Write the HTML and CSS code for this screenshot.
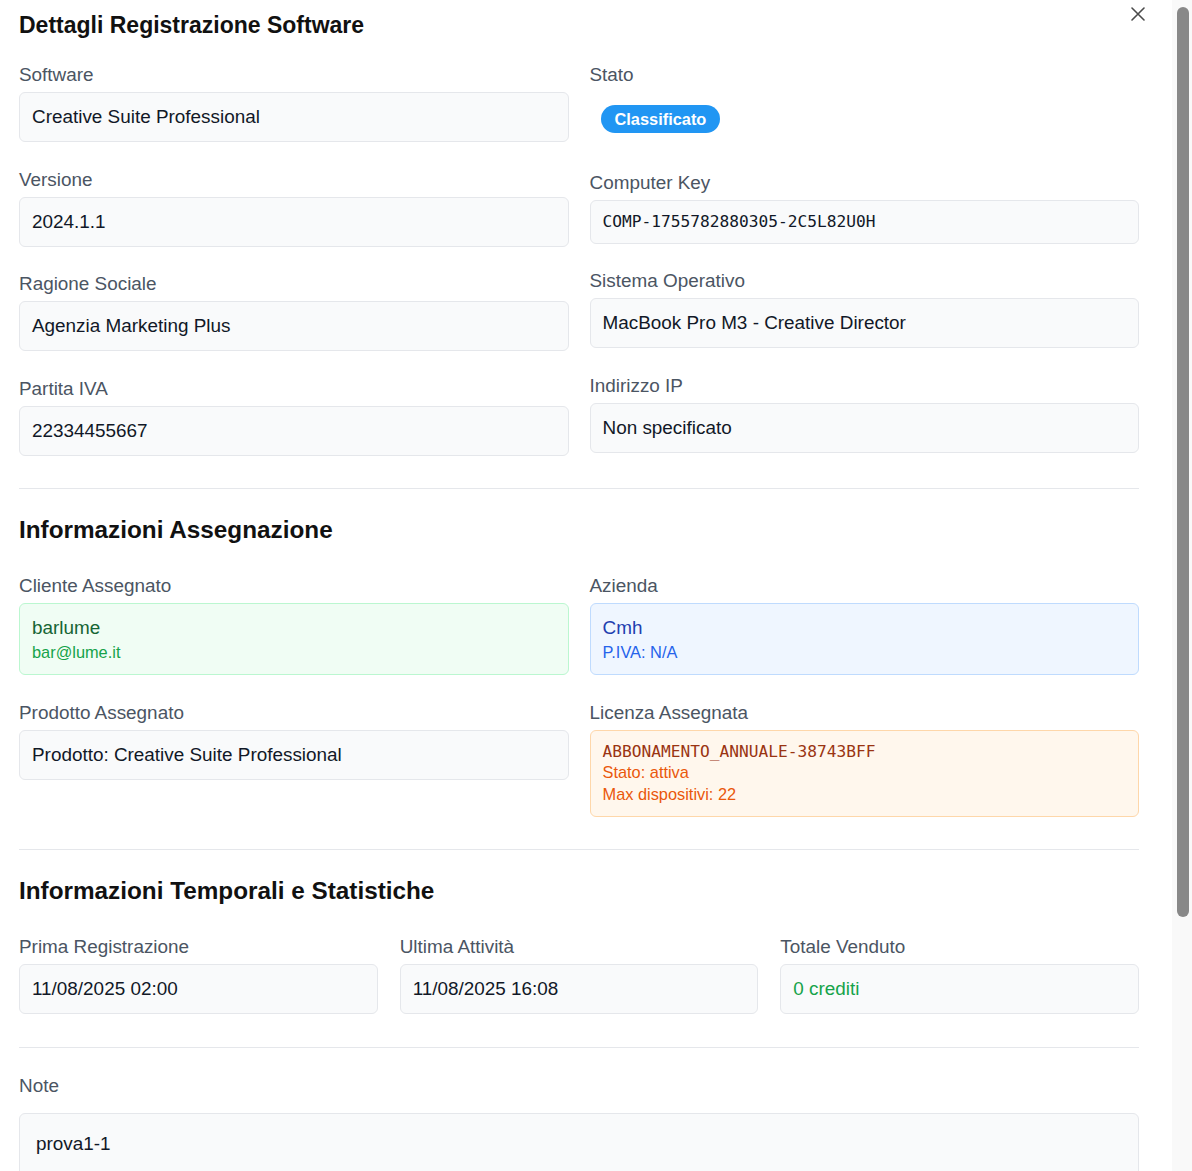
FILE: index.html
```html
<!DOCTYPE html>
<html lang="it">
<head>
<meta charset="utf-8">
<title>Dettagli Registrazione Software</title>
<link rel="stylesheet" href="styles.css">
</head>
<body>
<div class="modal">
  <button class="close" aria-label="Chiudi">
    <svg viewBox="0 0 14 14" width="14" height="14"><path d="M1 1L13 13M13 1L1 13" stroke="#4b4b4b" stroke-width="1.6" fill="none" stroke-linecap="round"/></svg>
  </button>
  <div class="scroller">
    <div class="content">
      <h2 class="title">Dettagli Registrazione Software</h2>

      <div class="grid2 split">
        <div class="col">
          <div class="field">
            <div class="label">Software</div>
            <div class="box">Creative Suite Professional</div>
          </div>
          <div class="field">
            <div class="label">Versione</div>
            <div class="box">2024.1.1</div>
          </div>
          <div class="field">
            <div class="label">Ragione Sociale</div>
            <div class="box">Agenzia Marketing Plus</div>
          </div>
          <div class="field">
            <div class="label">Partita IVA</div>
            <div class="box">22334455667</div>
          </div>
        </div>
        <div class="col">
          <div class="field">
            <div class="label">Stato</div>
            <div class="badge-wrap"><span class="badge">Classificato</span></div>
          </div>
          <div class="field">
            <div class="label">Computer Key</div>
            <div class="box mono">COMP-1755782880305-2C5L82U0H</div>
          </div>
          <div class="field">
            <div class="label">Sistema Operativo</div>
            <div class="box">MacBook Pro M3 - Creative Director</div>
          </div>
          <div class="field">
            <div class="label">Indirizzo IP</div>
            <div class="box">Non specificato</div>
          </div>
        </div>
      </div>

      <div class="divider"></div>
      <h3 class="section-title">Informazioni Assegnazione</h3>

      <div class="grid2">
        <div class="field">
          <div class="label">Cliente Assegnato</div>
          <div class="box green">
            <div class="main">barlume</div>
            <div class="sub">bar@lume.it</div>
          </div>
        </div>
        <div class="field">
          <div class="label">Azienda</div>
          <div class="box blue">
            <div class="main">Cmh</div>
            <div class="sub">P.IVA: N/A</div>
          </div>
        </div>
        <div class="field">
          <div class="label">Prodotto Assegnato</div>
          <div class="box">Prodotto: Creative Suite Professional</div>
        </div>
        <div class="field">
          <div class="label">Licenza Assegnata</div>
          <div class="box orange">
            <div class="main mono">ABBONAMENTO_ANNUALE-38743BFF</div>
            <div class="sub">Stato: attiva</div>
            <div class="sub">Max dispositivi: 22</div>
          </div>
        </div>
      </div>

      <div class="divider"></div>
      <h3 class="section-title">Informazioni Temporali e Statistiche</h3>

      <div class="grid3">
        <div class="field">
          <div class="label">Prima Registrazione</div>
          <div class="box">11/08/2025 02:00</div>
        </div>
        <div class="field">
          <div class="label">Ultima Attività</div>
          <div class="box">11/08/2025 16:08</div>
        </div>
        <div class="field">
          <div class="label">Totale Venduto</div>
          <div class="box credit">0 crediti</div>
        </div>
      </div>

      <div class="divider note-divider"></div>
      <div class="field note">
        <div class="label">Note</div>
        <div class="box note-box">prova1-1</div>
      </div>
    </div>
  </div>
  <div class="scrollbar" aria-hidden="true">
    <div class="thumb"></div>
  </div>
</div>
</body>
</html>
```

FILE: styles.css
```css
html, body {
  margin: 0;
  padding: 0;
  background: #ffffff;
}

body {
  font-family: "Liberation Sans", Arial, sans-serif;
  color: #111827;
}

.modal {
  position: relative;
  display: flex;
  width: 1192px;
  height: 1171px;
  background: #ffffff;
  overflow: hidden;
}

.scroller {
  flex: 1;
  min-width: 0;
  height: 100%;
  overflow: hidden;
}

.scrollbar {
  width: 20px;
  flex: none;
  box-sizing: border-box;
  padding: 7px 3px 0 5px;
  background: #f9f9f9;
}

.thumb {
  height: 910px;
  border-radius: 6px;
  background: #888888;
}

.close {
  position: absolute;
  top: 7px;
  left: 1131px;
  width: 14px;
  height: 14px;
  padding: 0;
  margin: 0;
  border: 0;
  background: transparent;
  display: flex;
  z-index: 2;
}

.content {
  padding: 9px 33px 40px 19px;
}

.title {
  margin: 0 0 20px;
  font-size: 23px;
  line-height: 32px;
  font-weight: 700;
  color: #111111;
}

.section-title {
  margin: 0 0 26px;
  font-size: 24.3px;
  line-height: 32px;
  font-weight: 700;
  color: #111111;
}

.grid2 {
  display: grid;
  grid-template-columns: 1fr 1fr;
  column-gap: 21px;
  row-gap: 23.6px;
}

.grid2.split {
  align-items: start;
}

.grid3 {
  display: grid;
  grid-template-columns: 1fr 1fr 1fr;
  column-gap: 22px;
}

.col {
  display: flex;
  flex-direction: column;
  gap: 23.6px;
}

.label {
  font-size: 18.9px;
  line-height: 28px;
  color: #4b5563;
  margin-bottom: 3px;
}

.box {
  background: #f9fafb;
  border: 1px solid #e5e7eb;
  border-radius: 6px;
  padding: 11px 12px;
  font-size: 18.9px;
  line-height: 26px;
  color: #111827;
}

.mono {
  font-family: "DejaVu Sans Mono", "Liberation Mono", monospace;
  font-size: 16.2px;
  line-height: 20px;
}

.badge-wrap {
  padding: 13px 11px 12px;
  height: 28px;
}

.badge {
  display: inline-block;
  height: 28px;
  line-height: 28px;
  padding: 0 14px;
  border-radius: 14px;
  background: #2196f3;
  color: #ffffff;
  font-size: 16.38px;
  font-weight: 700;
}

.box .main {
  line-height: 26px;
}

.box .sub {
  font-size: 16.38px;
  line-height: 22px;
}

.green {
  background: #f0fdf4;
  border-color: #bbf7d0;
}
.green .main { color: #166534; }
.green .sub { color: #16a34a; }

.blue {
  background: #eff6ff;
  border-color: #bfdbfe;
}
.blue .main { color: #1e40af; }
.blue .sub { color: #2563eb; }

.orange {
  background: #fff7ed;
  border-color: #fed7aa;
}
.orange .main.mono {
  color: #9a3412;
  line-height: 19px;
}
.orange .sub { color: #ea580c; }

.credit {
  color: #16a34a;
}

.divider {
  height: 0;
  border-top: 1px solid #e5e7eb;
  margin: 32.5px 0 25px;
}

.note-divider {
  margin-bottom: 24px;
}

.note .label {
  margin-bottom: 13px;
}

.note-box {
  padding: 16px 16px;
  line-height: 28px;
  min-height: 60px;
}
```
